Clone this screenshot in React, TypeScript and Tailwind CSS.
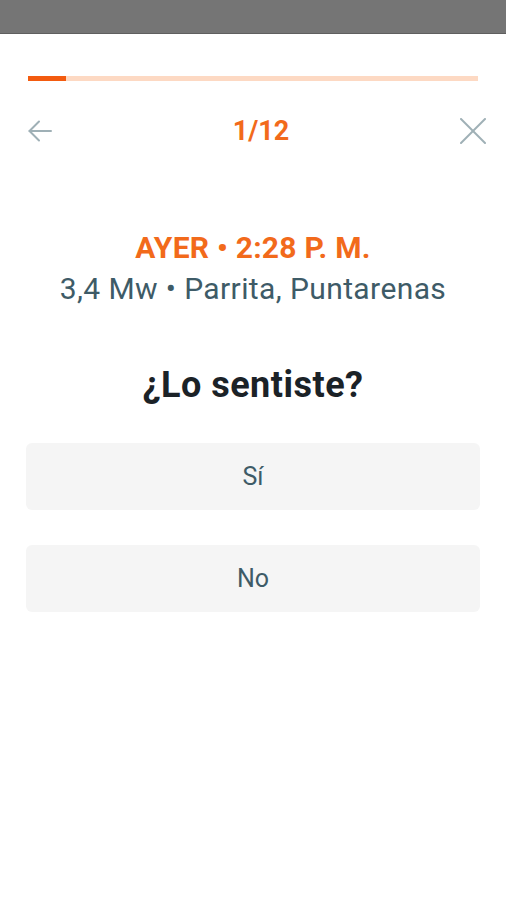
import React from 'react';

const font = { fontFamily: 'Roboto, "Noto Sans", sans-serif' };

export default function App() {
	return (
		<div className="w-[506px] h-[900px] bg-white flex flex-col" style={font}>
			<div className="h-[34px] bg-[#757575] border-b border-[#5f5f5f]" />
			<div className="px-[28px] pt-[42px]">
				<div className="h-[5px] bg-[#fdd9c3] flex">
					<div className="w-[38px] h-full bg-[#f35b0f]" />
				</div>
			</div>
			<div className="flex items-center justify-between pl-[28px] pr-[20px] mt-[36px] h-[28px]">
				<svg width="24" height="24" viewBox="0 0 24 24" fill="none" stroke="#9fb0b6" strokeWidth="2" strokeLinecap="round" strokeLinejoin="round">
					<path d="M23 12H1.5" />
					<path d="M11 2.5 1.5 12l9.5 9.5" />
				</svg>
				<span className="text-[27px] leading-[32px] font-bold text-[#f26a1b] pl-[10px]">1/12</span>
				<svg width="26" height="26" viewBox="0 0 26 26" fill="none" stroke="#9fb0b6" strokeWidth="2" strokeLinecap="round">
					<path d="M1 1l24 24" />
					<path d="M25 1 1 25" />
				</svg>
			</div>
			<div className="flex flex-col items-center mt-[85px]">
				<div className="text-[30px] leading-[36px] tracking-[0.25px] font-bold text-[#f26a1b]">AYER • 2:28 P. M.</div>
				<div className="text-[30px] leading-[36px] tracking-[0.4px] text-[#3e5b67] mt-[5px]">3,4 Mw • Parrita, Puntarenas</div>
				<div className="text-[36px] leading-[44px] tracking-[0.5px] font-bold text-[#1b2227] mt-[56px]">¿Lo sentiste?</div>
			</div>
			<div className="flex flex-col gap-[35px] px-[26px] mt-[36px]">
				<button className="h-[67px] w-full rounded-[6px] bg-[#f5f5f5] text-[25px] text-[#3e5b67]">Sí</button>
				<button className="h-[67px] w-full rounded-[6px] bg-[#f5f5f5] text-[25px] text-[#3e5b67]">No</button>
			</div>
		</div>
	);
}
